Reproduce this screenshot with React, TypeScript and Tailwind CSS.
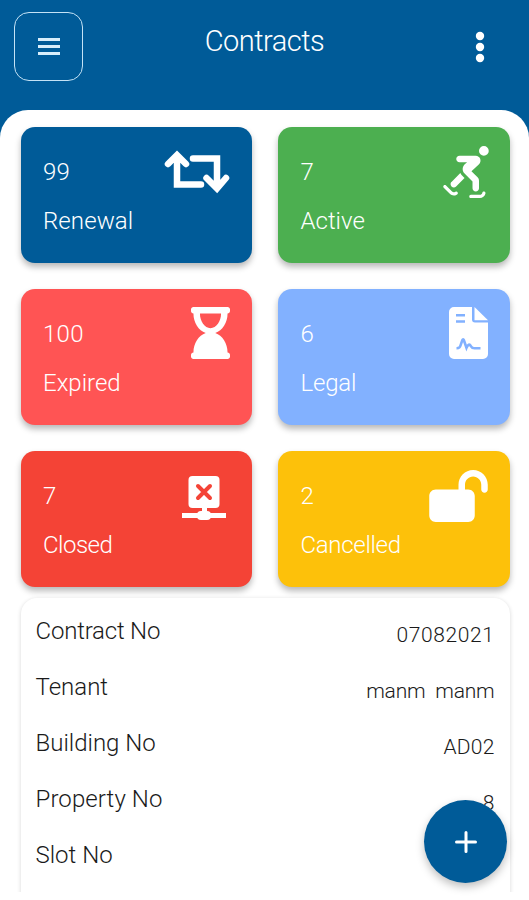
import type { ReactNode } from "react";
import { FaHourglassEnd } from "react-icons/fa";
import { FaLockOpen, FaPersonSkating } from "react-icons/fa6";

type Stat = {
	count: string;
	label: string;
	color: string;
	labelStyle?: string;
	icon: ReactNode;
};

function RenewalIcon() {
	return (
		<svg
			width="66"
			height="44"
			viewBox="0 0 66 44"
			fill="none"
			stroke="currentColor"
			strokeWidth="6.5"
			strokeLinecap="round"
		>
			<path d="M4 14 13 5l9 9M13 7v27.500h24" />
			<path d="M29 8.500h24v29M42.500 28 53 38.500 62 28" />
		</svg>
	);
}

function LegalIcon() {
	return (
		<svg width="39" height="52" viewBox="0 0 39 52" fill="currentColor">
			<path d="M5 0h18v12.500a3 3 0 0 0 3 3h13V47a5 5 0 0 1-5 5H5a5 5 0 0 1-5-5V5a5 5 0 0 1 5-5z" />
			<path d="M25.500 0 39 13.200H25.500z" />
			<path
				d="M7 8.200h9M7 14.500h9M7.500 41.200c3 0 3.500-1 4.300-3.600l1.600-4.600c.4-1 1.100-1 1.400 0l2.700 7.800c1.500-3.500 3-4.300 4.500-1.500.8 1.500 1.600 2 3.500 2h6"
				fill="none"
				stroke="#82b1ff"
				strokeWidth="2.6"
			/>
		</svg>
	);
}

function ClosedIcon() {
	return (
		<svg width="44" height="46" viewBox="0 0 44 46">
			<rect x="6.500" y="0" width="31" height="32" rx="4" fill="currentColor" />
			<path d="m16 10 12 12M28 10 16 22" stroke="#f44336" strokeWidth="4" strokeLinecap="round" />
			<path d="M20 31h5v5h-5zM0 37h44v5H0z" fill="currentColor" />
			<rect x="15" y="35" width="14" height="9" rx="4" fill="currentColor" />
		</svg>
	);
}

const stats: Stat[] = [
	{
		count: "99",
		label: "Renewal",
		color: "bg-[#005b98]",
		labelStyle: "tracking-[0.1px]",
		icon: <div className="-mt-[4px]"><RenewalIcon /></div>,
	},
	{
		count: "7",
		label: "Active",
		color: "bg-[#4caf50]",
		icon: <FaPersonSkating className="-mt-[8px] -mr-[1px] h-[52px] w-[46px]" />,
	},
	{
		count: "100",
		label: "Expired",
		color: "bg-[#ff5454]",
		icon: <FaHourglassEnd className="-mt-[9px] h-[52px] w-[39px]" />,
	},
	{
		count: "6",
		label: "Legal",
		color: "bg-[#82b1ff]",
		labelStyle: "-tracking-[0.2px]",
		icon: <div className="-mt-[9px]"><LegalIcon /></div>,
	},
	{
		count: "7",
		label: "Closed",
		color: "bg-[#f44336]",
		labelStyle: "-tracking-[0.5px]",
		icon: <div className="-mt-[2px] mr-[4px]"><ClosedIcon /></div>,
	},
	{
		count: "2",
		label: "Cancelled",
		color: "bg-[#fdc10a]",
		labelStyle: "-tracking-[0.3px]",
		icon: <FaLockOpen className="-mt-[8px] h-[52px] w-[59px]" />,
	},
];

const details = [
	{ label: "Contract No", value: "07082021", labelStyle: "-tracking-[0.2px]", valueStyle: "tracking-[0.6px]" },
	{ label: "Tenant", value: "manm  manm", valueStyle: "-tracking-[0.2px]" },
	{ label: "Building No", value: "AD02", valueStyle: "tracking-[0.2px]" },
	{ label: "Property No", value: "8", labelStyle: "tracking-[0.1px]" },
	{ label: "Slot No", value: "" },
];

function StatCard({ count, label, color, labelStyle = "", icon }: Stat) {
	return (
		<div
			className={`flex h-[135.5px] justify-between rounded-[14px] pt-[27px] pr-[22px] pl-[22.5px] text-white shadow-[0_4px_6px_rgba(0,0,0,0.28)] ${color}`}
		>
			<div className="text-[24px] leading-[36px] font-light">
				<p className="tracking-[0.3px]">{count}</p>
				<p className={`mt-[13px] ${labelStyle}`}>{label}</p>
			</div>
			{icon}
		</div>
	);
}

export default function App() {
	return (
		<div className="relative h-[900px] w-[529px] overflow-hidden bg-[#005b98] font-['Roboto',sans-serif]">
			<header className="grid h-[110px] grid-cols-[1fr_auto_1fr] items-start px-[14px] pt-[12px] text-white">
				<button className="flex size-[69px] items-center justify-center rounded-[15px] border-[1.5px] border-[#c5e3f6]">
					<svg width="24" height="17" viewBox="0 0 24 17" fill="none" stroke="#d8eefb" strokeWidth="3">
						<path d="M1 1.5h22M1 8.5h22M1 15.5h22" />
					</svg>
				</button>
				<h1 className="pt-[9px] text-[29px] leading-[40px] font-light -tracking-[0.5px]">Contracts</h1>
				<svg className="mt-[19px] mr-[30px] justify-self-end" width="10" height="32" viewBox="0 0 10 32" fill="white">
					<circle cx="5" cy="5" r="4.2" />
					<circle cx="5" cy="16" r="4.2" />
					<circle cx="5" cy="27" r="4.2" />
				</svg>
			</header>

			<main className="h-[790px] rounded-t-[28px] bg-white pt-[17px] pr-[19.5px] pl-[20.5px]">
				<div className="grid grid-cols-2 gap-x-[26px] gap-y-[26.5px]">
					{stats.map((s) => (
						<StatCard key={s.label} {...s} />
					))}
				</div>

				<div className="-mx-[10px] h-[305.5px] overflow-hidden px-[10px] pt-[11.5px]">
					<div className="h-[320px] rounded-t-[16px] bg-white px-[15px] pt-[5px] text-[#1a1a1a] shadow-[0_1px_4px_rgba(0,0,0,0.16)]">
						{details.map(({ label, value, labelStyle = "", valueStyle = "" }) => (
							<div key={label} className="flex h-[56px] justify-between leading-[56px] font-light">
								<span className={`text-[24px] ${labelStyle}`}>{label}</span>
								<span className={`pt-[4px] text-[21px] whitespace-pre ${valueStyle}`}>{value}</span>
							</div>
						))}
					</div>
				</div>
			</main>

			<button className="absolute top-[800px] left-[424px] flex size-[83px] items-center justify-center rounded-full bg-[#005b98] shadow-[0_4px_8px_rgba(0,0,0,0.25)]">
				<svg width="22" height="22" viewBox="0 0 22 22" stroke="white" strokeWidth="3" strokeLinecap="round">
					<path d="M11 1.5v19M1.5 11h19" />
				</svg>
			</button>
		</div>
	);
}
